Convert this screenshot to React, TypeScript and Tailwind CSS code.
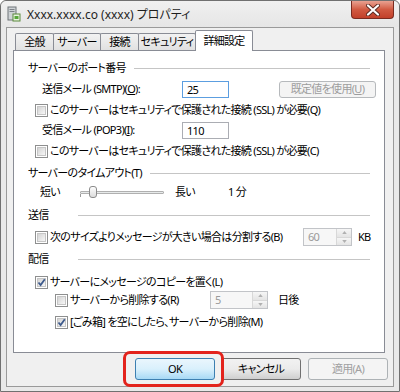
import React from 'react';

const jp = "font-['Noto_Sans','Noto_Sans_CJK_JP',sans-serif] [font-feature-settings:'palt']";

const Check = ({ checked = false }: { checked?: boolean }) => (
  <div className="w-[13px] h-[13px] shrink-0 border border-[#8e8f8f] bg-white p-px">
    <div className="relative w-full h-full bg-gradient-to-br from-[#d4d4d4] to-[#f7f7f7] border border-[#c6c6c6]">
      {checked && (
        <svg viewBox="0 0 9 9" className="absolute -left-px -top-px w-[9px] h-[9px]">
          <path d="M1.5 4.5 L3.6 7 L7.8 1.2" fill="none" stroke="#3d5a8c" strokeWidth="1.8" />
        </svg>
      )}
    </div>
  </div>
);

const CheckRow = ({ label, checked, indent = 'ml-[21px]' }: { label: string; checked?: boolean; indent?: string }) => (
  <div className={`flex items-center ${indent}`}>
    <Check checked={checked} />
    <span className="ml-[2px] whitespace-nowrap">{label}</span>
  </div>
);

const Group = ({ title, minW = '' }: { title: string; minW?: string }) => (
  <div className="flex items-center h-[16px] pl-[14px] pr-[14px]">
    <span className={`whitespace-nowrap pr-[8px] ${minW}`}>{title}</span>
    <div className="flex-1 h-px bg-[#c5c5c5] mt-px" />
  </div>
);

const Spin = ({ value, w }: { value: string; w: string }) => (
  <div className={`flex h-[18px] border border-[#c2c4c8] bg-[#f7f7f7] ${w}`}>
    <span className="flex-1 pl-[4px] text-[#9a9a9a] leading-[16px]">{value}</span>
    <div className="flex flex-col w-[15px] border-l border-[#d8d8d8]">
      <div className="flex-1 flex items-center justify-center bg-gradient-to-b from-[#f6f6f6] to-[#e4e4e4] border-b border-[#d8d8d8]">
        <svg viewBox="0 0 6 4" className="w-[5px] h-[3px]"><path d="M0 4 L3 0 L6 4Z" fill="#b0b0b0" /></svg>
      </div>
      <div className="flex-1 flex items-center justify-center bg-gradient-to-b from-[#f6f6f6] to-[#e4e4e4]">
        <svg viewBox="0 0 6 4" className="w-[5px] h-[3px]"><path d="M0 0 L3 4 L6 0Z" fill="#b0b0b0" /></svg>
      </div>
    </div>
  </div>
);

const Tab = ({ label, selected = false, w }: { label: string; selected?: boolean; w: string }) =>
  selected ? (
    <div className={`relative z-10 -mb-px -ml-px h-[21px] ${w} flex items-center justify-center whitespace-nowrap bg-white border border-b-0 border-[#898c95] rounded-t-[2px]`}>
      {label}
    </div>
  ) : (
    <div className={`h-[17px] ${w} -ml-px first:ml-0 flex items-center justify-center whitespace-nowrap bg-gradient-to-b from-[#f2f2f2] to-[#e1e1e1] border border-b-0 border-[#898c95] rounded-t-[2px]`}>
      {label}
    </div>
  );

const Btn = ({ label, primary, disabled }: { label: string; primary?: boolean; disabled?: boolean }) => (
  <div
    className={`w-[80px] h-[22px] flex items-center justify-center rounded-[3px] border ${
      primary
        ? 'border-[#3c7fb1] bg-gradient-to-b from-[#eaf6fd] via-[#d9f0fc] to-[#a7d9f5]'
        : disabled
        ? 'border-[#adb2b5] bg-[#f4f4f4] text-[#a0a0a0]'
        : 'border-[#707070] bg-gradient-to-b from-[#f2f2f2] via-[#ebebeb] to-[#cfcfcf]'
    }`}
  >
    {label}
  </div>
);

export default function App() {
  return (
    <div className={`relative w-[400px] h-[392px] bg-[#e9e9e9] border border-[#707070] rounded-t-[6px] text-[11px] tracking-[-0.7px] text-black ${jp}`}>
      <div className="flex items-start h-[26px] pl-[6px] bg-gradient-to-b from-[#f0f0f0] to-[#e6e6e6] rounded-t-[6px]">
        <svg viewBox="0 0 14 16" className="w-[14px] h-[16px] mt-[5px] shrink-0">
          <rect x="1" y="1" width="8" height="13" fill="#cfd3d6" stroke="#6f7479" />
          <rect x="2.5" y="3" width="5" height="1" fill="#7d8288" />
          <rect x="2.5" y="5" width="5" height="1" fill="#7d8288" />
          <rect x="6" y="8" width="7" height="7" fill="#e9f2e0" stroke="#5b8a3c" />
          <rect x="7.5" y="10" width="4" height="3" fill="#58a83a" />
        </svg>
        <span className="ml-[6px] mt-[5px] text-[12px] tracking-normal text-[#1e1e1e] whitespace-nowrap">Xxxx.xxxx.co (xxxx) プロパティ</span>
        <div className="ml-auto mr-[5px] w-[43px] h-[18px] flex items-center justify-center rounded-b-[4px] border border-t-0 border-[#7a2b20] bg-gradient-to-b from-[#e8a191] via-[#d15a42] to-[#c2402a]">
          <svg viewBox="0 0 14 12" className="w-[14px] h-[12px]">
            <path d="M2 1.5 L12 10.5 M12 1.5 L2 10.5" stroke="#5a2a22" strokeWidth="4" strokeLinecap="round" />
            <path d="M2 1.5 L12 10.5 M12 1.5 L2 10.5" stroke="#ffffff" strokeWidth="2.2" strokeLinecap="round" />
          </svg>
        </div>
      </div>

      <div className="mx-[5px] h-[360px] border border-[#9a9a9a] bg-[#f0f0f0]">
        <div className="flex items-end h-[22px] pl-[8px]">
          <Tab label="全般" w="w-[39px]" />
          <Tab label="サーバー" w="w-[48px]" />
          <Tab label="接続" w="w-[39px]" />
          <Tab label="セキュリティ" w="w-[58px]" />
          <Tab label="詳細設定" w="w-[58px]" selected />
        </div>

        <div className="ml-[6px] w-[372px] h-[303px] bg-white border border-[#898c95] flex flex-col">
          <div className="mt-[9px]">
            <Group title="サーバーのポート番号" />
          </div>
          <div className="mt-[4px] flex items-center h-[18px] pl-[28px]">
            <span className="w-[140px] whitespace-nowrap">送信メール (SMTP)(<u>O</u>):</span>
            <div className="w-[47px] h-[17px] border border-[#5c9ee0] pl-[4px] leading-[15px]">25</div>
            <div className="ml-[50px] w-[97px] h-[17px] flex items-center justify-center rounded-[3px] border border-[#b6b9bc] bg-[#f4f4f4] text-[#9d9d9d]">
              既定値を使用(<u>U</u>)
            </div>
          </div>
          <div className="mt-[4px] h-[16px] flex items-center">
            <CheckRow label="このサーバーはセキュリティで保護された接続 (SSL) が必要(Q)" />
          </div>
          <div className="mt-[3px] flex items-center h-[18px] pl-[28px]">
            <span className="w-[140px] whitespace-nowrap">受信メール (POP3)(<u>I</u>):</span>
            <div className="w-[47px] h-[17px] border border-[#abadb3] pl-[4px] leading-[15px]">110</div>
          </div>
          <div className="mt-[4px] h-[16px] flex items-center">
            <CheckRow label="このサーバーはセキュリティで保護された接続 (SSL) が必要(C)" />
          </div>
          <div className="mt-[6px]">
            <Group title="サーバーのタイムアウト(T)" />
          </div>
          <div className="mt-[3px] h-[16px] flex items-center pl-[26px]">
            <span className="w-[40px]">短い</span>
            <div className="relative w-[84px] h-[16px]">
              <div className="absolute left-0 top-[7px] w-[84px] h-[3px] bg-[#e7eaea] border border-[#b0b0b0] rounded-[1px]" />
              <div className="absolute left-0 top-[10px] w-px h-[3px] bg-[#9a9a9a]" />
              <div className="absolute left-[9px] top-[2px] w-[8px] h-[12px] rounded-[3px] border border-[#8b8b8b] bg-gradient-to-b from-[#fdfdfd] to-[#dcdcdc]" />
            </div>
            <span className="ml-[11px] w-[53px]">長い</span>
            <span>1 分</span>
          </div>
          <div className="mt-[7px]">
            <Group title="送信" minW="min-w-[50px]" />
          </div>
          <div className="mt-[5px] h-[18px] flex items-center">
            <div className="w-[289px] shrink-0">
              <CheckRow label="次のサイズよりメッセージが大きい場合は分割する(B)" />
            </div>
            <Spin value="60" w="w-[49px]" />
            <span className="ml-[6px]">KB</span>
          </div>
          <div className="mt-[5px]">
            <Group title="配信" minW="min-w-[50px]" />
          </div>
          <div className="mt-[7px] h-[16px] flex items-center">
            <CheckRow label="サーバーにメッセージのコピーを置く(L)" checked />
          </div>
          <div className="mt-[1px] h-[18px] flex items-center">
            <div className="w-[196px] shrink-0">
              <CheckRow label="サーバーから削除する(R)" indent="ml-[41px]" />
            </div>
            <Spin value="5" w="w-[58px]" />
            <span className="ml-[10px]">日後</span>
          </div>
          <div className="mt-[5px] h-[16px] flex items-center">
            <CheckRow label="[ごみ箱] を空にしたら、サーバーから削除(M)" checked indent="ml-[41px]" />
          </div>
        </div>

        <div className="mt-[5px] flex pl-[128px] gap-[6px]">
          <Btn label="OK" primary />
          <Btn label="キャンセル" />
          <div className="ml-px">
            <Btn label="適用(A)" disabled />
          </div>
        </div>
      </div>

      <div className="absolute left-[122px] top-[350px] w-[101px] h-[36px] border-[3px] border-[#e3231c] rounded-[7px]" />
    </div>
  );
}
